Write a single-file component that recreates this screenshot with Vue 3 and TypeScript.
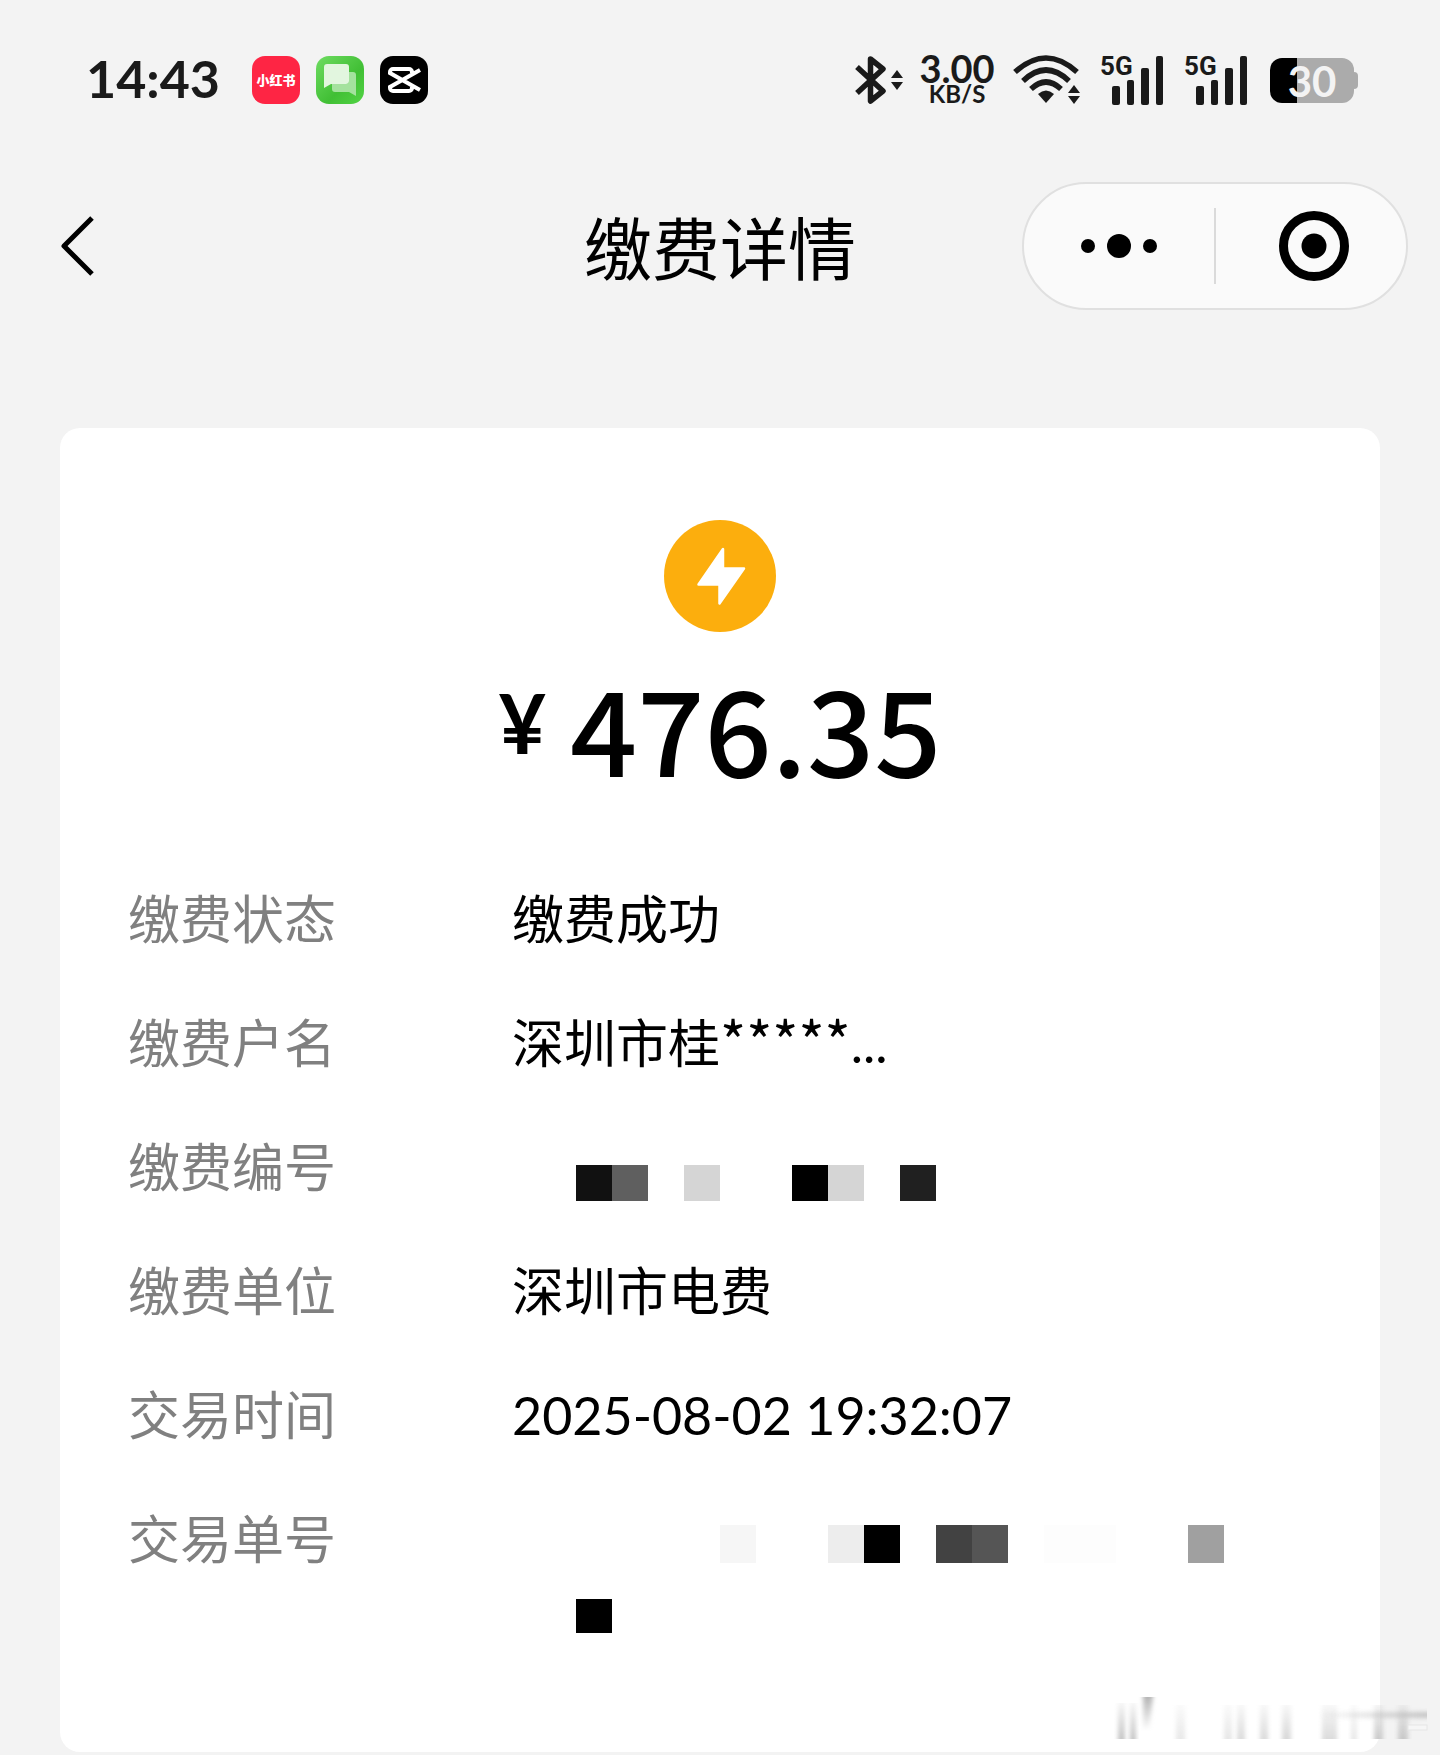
<script setup lang="ts">
interface Block {
  x: number
  y: number
  w: number
  h: number
  fill: string
}

interface DetailRow {
  label: string
  text?: string
  stars?: string
  tail?: string
  blocks?: Block[]
  height?: number
}

const accountBlocks: Block[] = [
  { x: 64, y: 32, w: 36, h: 36, fill: '#111111' },
  { x: 100, y: 32, w: 36, h: 36, fill: '#5f5f5f' },
  { x: 172, y: 32, w: 36, h: 36, fill: '#d5d5d5' },
  { x: 280, y: 32, w: 36, h: 36, fill: '#000000' },
  { x: 316, y: 32, w: 36, h: 36, fill: '#d5d5d5' },
  { x: 388, y: 32, w: 36, h: 36, fill: '#202020' },
]

const orderBlocks: Block[] = [
  { x: 208, y: 20, w: 36, h: 38, fill: '#f6f6f6' },
  { x: 316, y: 20, w: 36, h: 38, fill: '#ededed' },
  { x: 352, y: 20, w: 36, h: 38, fill: '#000000' },
  { x: 424, y: 20, w: 36, h: 38, fill: '#424242' },
  { x: 460, y: 20, w: 36, h: 38, fill: '#555555' },
  { x: 532, y: 20, w: 72, h: 38, fill: '#fdfdfd' },
  { x: 676, y: 20, w: 36, h: 38, fill: '#a0a0a0' },
  { x: 64, y: 94, w: 36, h: 34, fill: '#000000' },
]

const rows: DetailRow[] = [
  { label: '缴费状态', text: '缴费成功' },
  { label: '缴费户名', text: '深圳市桂', stars: '*****', tail: '...' },
  { label: '缴费编号', blocks: accountBlocks, height: 68 },
  { label: '缴费单位', text: '深圳市电费' },
  { label: '交易时间', text: '2025-08-02 19:32:07' },
  { label: '交易单号', blocks: orderBlocks, height: 128 },
]

const signals = [1, 2]

const streaks: Block[] = [
  { x: 10, y: 6, w: 7, h: 36, fill: '#c4c4c4' },
  { x: 22, y: 6, w: 6, h: 36, fill: '#c4c4c4' },
  { x: 68, y: 8, w: 9, h: 34, fill: '#e8e8e8' },
  { x: 116, y: 8, w: 8, h: 34, fill: '#e6e6e6' },
  { x: 129, y: 8, w: 8, h: 34, fill: '#dcdcdc' },
  { x: 152, y: 8, w: 8, h: 34, fill: '#dadada' },
  { x: 174, y: 8, w: 9, h: 34, fill: '#d8d8d8' },
  { x: 214, y: 8, w: 15, h: 34, fill: '#dcdcdc' },
  { x: 243, y: 8, w: 6, h: 34, fill: '#e8e8e8' },
  { x: 266, y: 8, w: 9, h: 34, fill: '#cacaca' },
  { x: 290, y: 8, w: 10, h: 34, fill: '#c8c8c8' },
]
</script>

<template>
  <div class="page">
    <div class="status">
      <span class="clock">14:43</span>
      <div class="apps">
        <span class="app app-red">小红书</span>
        <svg class="app" viewBox="0 0 48 48" aria-hidden="true">
          <defs>
            <linearGradient id="msg-bg" x1="0" y1="0" x2="1" y2="1">
              <stop offset="0" stop-color="#6fdc62" />
              <stop offset="0.6" stop-color="#41bf35" />
              <stop offset="1" stop-color="#52d445" />
            </linearGradient>
          </defs>
          <rect width="48" height="48" rx="13" fill="url(#msg-bg)" />
          <path d="M33 16h4a3 3 0 0 1 3 3v21l-7-4H19a3 3 0 0 1-3-3v-5h14a3 3 0 0 0 3-3z" fill="#a4e29e" />
          <path d="M11 8h19a3 3 0 0 1 3 3v14a3 3 0 0 1-3 3H15l-7 4V11a3 3 0 0 1 3-3z" fill="#e2f6df" />
        </svg>
        <svg class="app" viewBox="0 0 48 48" aria-hidden="true">
          <rect width="48" height="48" rx="13" fill="#000" />
          <path
            d="M40 14 10 31v1a3 3 0 0 0 3 3h16a3 3 0 0 0 3-3v-1M40 34 10 17v-1a3 3 0 0 1 3-3h16a3 3 0 0 1 3 3v1"
            fill="none"
            stroke="#fff"
            stroke-width="4"
          />
        </svg>
      </div>

      <div class="indicators">
        <svg width="48" height="50" viewBox="0 0 48 50" aria-hidden="true">
          <path d="M3 12 29 36 16.500 46V4L29 14 3 38" fill="none" stroke="#1a1a1a" stroke-width="5.500" stroke-linejoin="round" />
          <path d="M43 15l6 8H37zM37 27h12l-6 8z" fill="#1a1a1a" />
        </svg>
        <div class="speed">
          <span class="speed-value">3.00</span>
          <span class="speed-unit">KB/S</span>
        </div>
        <svg width="68" height="50" viewBox="0 0 68 50" aria-hidden="true">
          <g fill="none" stroke="#1a1a1a" stroke-width="5.500">
            <path d="M3 17Q34-11 65 17" />
            <path d="M11 26Q34 4 57 26" />
            <path d="M19 34Q34 20 49 34" />
          </g>
          <path d="M26 39q8-7 16 0l-8 9z" fill="#1a1a1a" />
          <path d="M62 30l6 8H56zM56 41h12l-6 8z" fill="#1a1a1a" />
        </svg>
        <div v-for="n in signals" :key="n" class="signal">
          <span class="network">5G</span>
          <svg width="64" height="50" viewBox="0 0 64 50" aria-hidden="true">
            <g fill="#1a1a1a">
              <rect x="12" y="31" width="8" height="19" rx="2" />
              <rect x="27" y="25" width="7" height="25" rx="2" />
              <rect x="41" y="13" width="8" height="37" rx="2" />
              <rect x="56" y="1" width="7" height="49" rx="2" />
            </g>
          </svg>
        </div>
        <div class="battery"><span class="level">30</span></div>
      </div>
    </div>

    <header class="nav">
      <button class="back" type="button" aria-label="返回">
        <svg width="36" height="64" viewBox="0 0 36 64" aria-hidden="true">
          <path d="M32 4 4 32l28 28" fill="none" stroke="#000" stroke-width="5" stroke-linejoin="round" />
        </svg>
      </button>
      <h1 class="title">缴费详情</h1>
      <div class="capsule">
        <button type="button" aria-label="更多">
          <svg width="76" height="26" viewBox="0 0 76 26" aria-hidden="true">
            <circle cx="7" cy="13" r="7" />
            <circle cx="38" cy="13" r="12" />
            <circle cx="69" cy="13" r="7" />
          </svg>
        </button>
        <span class="divider"></span>
        <button type="button" aria-label="关闭">
          <svg width="72" height="72" viewBox="0 0 72 72" aria-hidden="true">
            <circle cx="39" cy="36" r="30.500" fill="none" stroke="#000" stroke-width="9" />
            <circle cx="39" cy="36" r="12.500" />
          </svg>
        </button>
      </div>
    </header>

    <main class="card">
      <svg class="bolt" width="112" height="112" viewBox="0 0 112 112" aria-hidden="true">
        <circle cx="56" cy="56" r="56" fill="#fcae0d" />
        <path
          d="M59 29v19.500h21L55.500 83.500V64.500h-21z"
          fill="#fff"
          stroke="#fff"
          stroke-width="2.500"
          stroke-linejoin="round"
        />
      </svg>
      <p class="amount"><span class="yen">¥</span><span class="sum">476.35</span></p>
      <dl class="details">
        <div v-for="row in rows" :key="row.label" class="row">
          <dt>{{ row.label }}</dt>
          <dd>
            <template v-if="row.text">{{ row.text }}<span v-if="row.stars" class="stars">{{ row.stars }}</span>{{ row.tail }}</template>
            <svg v-else width="720" :height="row.height" role="img" aria-label="已隐藏">
              <rect
                v-for="b in row.blocks"
                :key="`${b.x}-${b.y}`"
                :x="b.x"
                :y="b.y"
                :width="b.w"
                :height="b.h"
                :fill="b.fill"
              />
            </svg>
          </dd>
        </div>
      </dl>
    </main>

    <svg class="smudge" width="320" height="46" viewBox="0 0 320 46" aria-hidden="true">
      <defs>
        <linearGradient id="fade-down" x1="0" y1="0" x2="0" y2="1">
          <stop offset="0" stop-color="#fff" stop-opacity="0" />
          <stop offset="1" stop-color="#fff" />
        </linearGradient>
        <linearGradient id="fade-up" x1="0" y1="0" x2="0" y2="1">
          <stop offset="0" stop-color="#b5b5b5" />
          <stop offset="1" stop-color="#b5b5b5" stop-opacity="0" />
        </linearGradient>
        <linearGradient id="fade-right" x1="0" y1="0" x2="1" y2="0">
          <stop offset="0" stop-color="#bbb" stop-opacity="0" />
          <stop offset="1" stop-color="#bbb" />
        </linearGradient>
        <mask id="streak-mask">
          <rect width="320" height="42" fill="url(#fade-down)" />
        </mask>
        <filter id="soft" x="-50%" width="200%">
          <feGaussianBlur stdDeviation="2 0" />
        </filter>
        <filter id="soft-y" y="-100%" height="300%">
          <feGaussianBlur stdDeviation="0 2" />
        </filter>
      </defs>
      <g mask="url(#streak-mask)">
        <rect
          v-for="s in streaks"
          :key="s.x"
          :x="s.x"
          :y="s.y"
          :width="s.w"
          :height="s.h"
          :fill="s.fill"
          filter="url(#soft)"
        />
      </g>
      <path d="M35 0h10l-4 34h-6z" fill="url(#fade-up)" filter="url(#soft)" />
      <rect x="210" y="15" width="109" height="6" fill="url(#fade-right)" opacity="0.800" filter="url(#soft-y)" />
      <rect x="300" y="28" width="19" height="5" fill="#f6f6f6" stroke="#e6e6e6" />
    </svg>
  </div>
</template>

<style>
body {
  margin: 0;
  background: #f3f3f3;
}
</style>

<style scoped>
.page {
  position: relative;
  box-sizing: border-box;
  padding-bottom: 3px;
  background: #f3f3f3;
  color: #000;
  font-family: Lato, "Noto Sans CJK SC", sans-serif;
}

.status {
  display: flex;
  align-items: center;
  height: 160px;
  padding: 0 82px 0 86px;
  color: #1a1a1a;
}

.clock {
  width: 166px;
  padding-bottom: 4px;
  font-size: 52px;
  font-weight: 700;
  line-height: 60px;
}

.apps {
  display: flex;
  gap: 16px;
}

.app {
  display: block;
  width: 48px;
  height: 48px;
}

.app-red {
  border-radius: 13px;
  background: #fe2544;
  color: #fff;
  font-size: 13px;
  font-weight: 900;
  line-height: 48px;
  text-align: center;
}

.indicators {
  display: flex;
  align-items: center;
  gap: 20px;
  margin-left: auto;
}

.indicators svg {
  overflow: visible;
}

.speed {
  display: flex;
  flex-direction: column;
  align-items: center;
  width: 78px;
  margin: 0 -4px;
  padding-top: 2px;
  font-weight: 700;
}

.speed-value {
  font-size: 38px;
  line-height: 26px;
}

.speed-unit {
  font-size: 24px;
  line-height: 26px;
}

.signal {
  position: relative;
  height: 50px;
}

.network {
  position: absolute;
  top: 0;
  left: 0;
  font-family: Roboto, sans-serif;
  font-size: 26px;
  font-weight: 700;
  line-height: 22px;
}

.battery {
  position: relative;
  width: 84px;
  height: 45px;
  margin: 0 4px 0 2px;
  border-radius: 12px;
  background: linear-gradient(90deg, #000 27px, #ababab 27px);
  color: #f3f3f3;
  text-align: center;
}

.battery::after {
  content: "";
  position: absolute;
  top: 14px;
  right: -4px;
  width: 4px;
  height: 17px;
  border-radius: 0 4px 4px 0;
  background: #ababab;
}

.level {
  font-size: 42px;
  font-weight: 700;
  line-height: 46px;
}

.nav {
  display: grid;
  grid-template-columns: 1fr auto 1fr;
  align-items: center;
  height: 172px;
  padding: 0 32px;
}

button {
  display: flex;
  align-items: center;
  justify-content: center;
  padding: 0;
  border: 0;
  background: none;
}

.back {
  width: 36px;
  height: 64px;
  margin-left: 28px;
}

.title {
  margin: 0;
  font-family: "Noto Sans CJK SC", sans-serif;
  font-size: 68px;
  font-weight: 400;
  line-height: 80px;
}

.capsule {
  display: flex;
  align-items: center;
  justify-self: end;
  box-sizing: border-box;
  width: 386px;
  height: 128px;
  border: 2px solid #e0e0e0;
  border-radius: 64px;
  background: #fafafa;
}

.capsule button {
  flex: 1;
  height: 100%;
}

.capsule svg {
  overflow: visible;
}

.divider {
  width: 2px;
  height: 76px;
  background: #dadada;
}

.card {
  margin: 96px 60px 0;
  padding: 92px 68px 91px;
  border-radius: 20px;
  background: #fff;
}

.bolt {
  display: block;
  margin: 0 auto;
}

.amount {
  display: flex;
  justify-content: center;
  gap: 24px;
  margin: 42px 0 79px;
  line-height: 104px;
}

.yen {
  font-size: 82px;
  font-weight: 700;
  line-height: 96px;
}

.sum {
  font-family: "Noto Sans CJK SC", sans-serif;
  font-size: 118px;
  font-weight: 500;
}

.details {
  margin: 0;
}

.row {
  display: flex;
  align-items: flex-start;
  padding: 28px 0;
  font-size: 52px;
  line-height: 68px;
}

dt {
  flex: 0 0 384px;
  color: #808080;
}

dd {
  flex: 1;
  min-width: 0;
  margin: 0;
}

.stars {
  font-family: "Noto Sans CJK SC", sans-serif;
  font-size: 56px;
  line-height: 1px;
}

dd svg {
  display: block;
}

.smudge {
  position: absolute;
  right: 12px;
  bottom: 12px;
}
</style>
